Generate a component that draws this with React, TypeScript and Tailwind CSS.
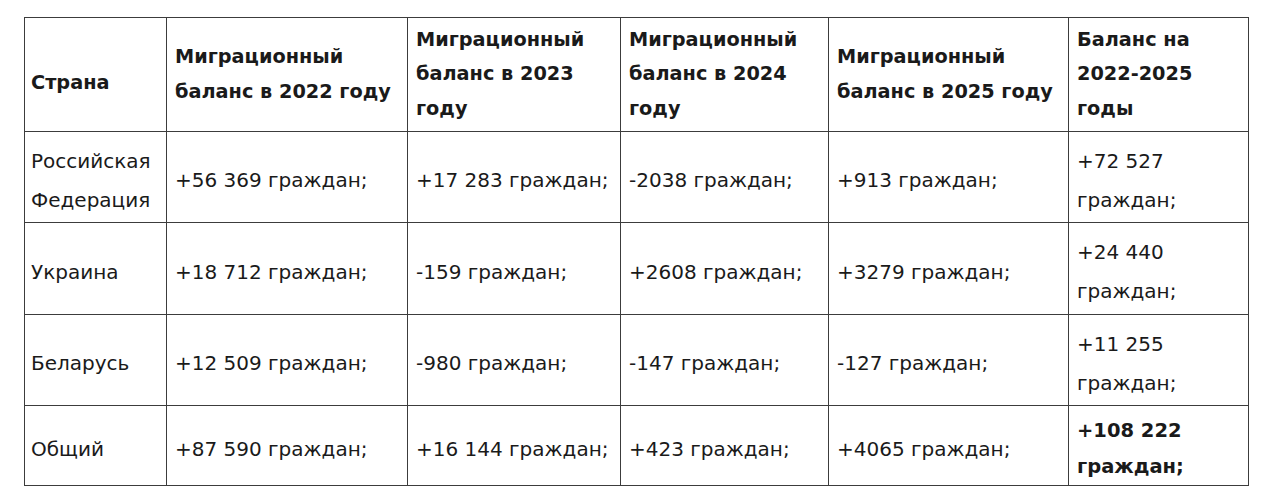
import * as React from "react";

const font = { fontFamily: '"DejaVu Sans", Verdana, sans-serif' };

const headers = [
  "Страна",
  "Миграционный баланс в 2022 году",
  "Миграционный баланс в 2023 году",
  "Миграционный баланс в 2024 году",
  "Миграционный баланс в 2025 году",
  "Баланс на 2022-2025 годы",
];

const rows: { cells: string[]; h: string; total?: boolean }[] = [
  {
    cells: ["Российская Федерация", "+56 369 граждан;", "+17 283 граждан;", "-2038 граждан;", "+913 граждан;", "+72 527 граждан;"],
    h: "h-[91px]",
  },
  {
    cells: ["Украина", "+18 712 граждан;", "-159 граждан;", "+2608 граждан;", "+3279 граждан;", "+24 440 граждан;"],
    h: "h-[92px]",
  },
  {
    cells: ["Беларусь", "+12 509 граждан;", "-980 граждан;", "-147 граждан;", "-127 граждан;", "+11 255 граждан;"],
    h: "h-[91px]",
  },
  {
    cells: ["Общий", "+87 590 граждан;", "+16 144 граждан;", "+423 граждан;", "+4065 граждан;", "+108 222 граждан;"],
    h: "h-[80px]",
    total: true,
  },
];

export default function App() {
  return (
    <div className="min-h-[504px] w-[1280px] bg-white pl-[24px] pt-[17px] text-[#1a1a1a]" style={font}>
      <table className="w-[1224px] table-fixed border-collapse">
        <colgroup>
          <col className="w-[142px]" />
          <col className="w-[241px]" />
          <col className="w-[213px]" />
          <col className="w-[208px]" />
          <col className="w-[240px]" />
          <col className="w-[180px]" />
        </colgroup>
        <thead>
          <tr className="h-[114px]">
            {headers.map((h, i) => (
              <th
                key={h}
                className={
                  "border border-[#3c3c3c] text-left align-middle text-[19.3px] leading-[34.5px] font-bold " +
                  (i === 0 ? "pt-[17px] pl-[6px] pr-2" : "px-2")
                }
              >
                {h}
              </th>
            ))}
          </tr>
        </thead>
        <tbody>
          {rows.map((r) => (
            <tr key={r.cells[0]} className={r.h}>
              {r.cells.map((c, i) => {
                const last = i === 5;
                const bold = last && r.total;
                return (
                  <td
                    key={i}
                    className={
                      "border border-[#3c3c3c] pt-[7px] pb-0 align-middle " +
                      (i === 0 ? "pl-[6px] pr-2 " : "px-2 ") +
                      (bold
                        ? "text-[19.5px] leading-[36px] font-bold"
                        : "text-[20px] leading-[39px]") +
                      (i > 0 && !last ? " whitespace-nowrap" : "")
                    }
                  >
                    {c}
                  </td>
                );
              })}
            </tr>
          ))}
        </tbody>
      </table>
    </div>
  );
}
